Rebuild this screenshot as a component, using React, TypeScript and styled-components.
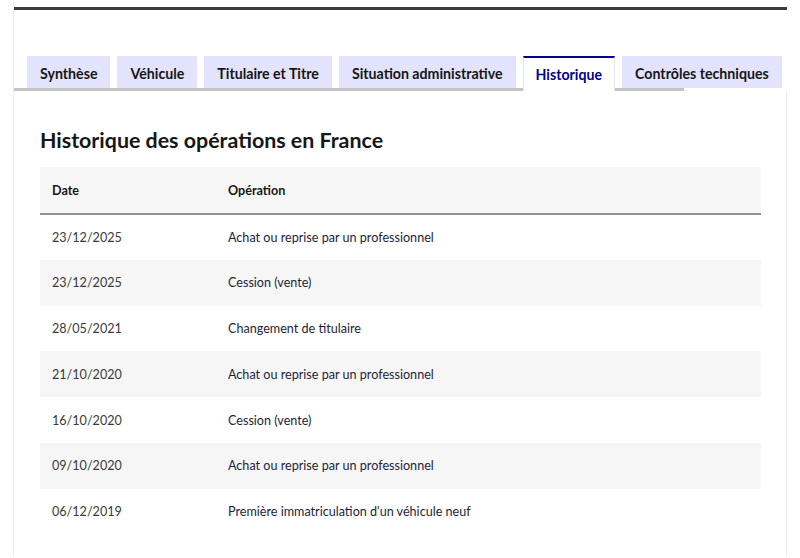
import React from "react";
import styled, { createGlobalStyle } from "styled-components";

const GlobalStyle = createGlobalStyle`
  body {
    margin: 0;
    background: #ffffff;
    font-family: "Lato", "Noto Sans", sans-serif;
    color: #161616;
  }
`;

const tabs = [
  "Synthèse",
  "Véhicule",
  "Titulaire et Titre",
  "Situation administrative",
  "Historique",
  "Contrôles techniques",
];

const operations = [
  { date: "23/12/2025", label: "Achat ou reprise par un professionnel" },
  { date: "23/12/2025", label: "Cession (vente)" },
  { date: "28/05/2021", label: "Changement de titulaire" },
  { date: "21/10/2020", label: "Achat ou reprise par un professionnel" },
  { date: "16/10/2020", label: "Cession (vente)" },
  { date: "09/10/2020", label: "Achat ou reprise par un professionnel" },
  { date: "06/12/2019", label: "Première immatriculation d'un véhicule neuf" },
];

const App = () => {
  return (
    <>
      <GlobalStyle />
      <Page>
        <TopRule />
        <TabList>
          {tabs.map((t) => (
            <Tab key={t} $active={t === "Historique"}>
              {t}
            </Tab>
          ))}
        </TabList>
        <Panel>
          <Heading>Historique des opérations en France</Heading>
          <Table>
            <thead>
              <tr>
                <HeadCell $first>Date</HeadCell>
                <HeadCell>Opération</HeadCell>
              </tr>
            </thead>
            <tbody>
              {operations.map((op, i) => (
                <Row key={i} $odd={i % 2 === 1}>
                  <DateCell>{op.date}</DateCell>
                  <OpCell>{op.label}</OpCell>
                </Row>
              ))}
            </tbody>
          </Table>
        </Panel>
      </Page>
    </>
  );
};

export default App;

const Page = styled.div`
  margin: 0 13px;
  border-left: 1px solid #ececec;
  padding-top: 7px;
`;

const TopRule = styled.div`
  height: 3px;
  background-color: #3a3a3a;
`;

const TabList = styled.div`
  display: flex;
  gap: 7px;
  margin-top: 46px;
  padding-left: 13px;
  position: relative;
  &::after {
    content: "";
    position: absolute;
    left: 0;
    bottom: -3px;
    width: 670px;
    height: 3px;
    background-color: #c4c4c4;
  }
`;

const Tab = styled.div<{ $active?: boolean }>`
  position: relative;
  z-index: 1;
  box-sizing: border-box;
  display: flex;
  align-items: center;
  padding: 0 ${(p) => (p.$active ? "12px" : "12px")};
  font-size: 14.2px;
  font-weight: 700;
  white-space: nowrap;
  color: ${(p) => (p.$active ? "#000091" : "#161616")};
  background-color: ${(p) => (p.$active ? "#ffffff" : "#e3e3fd")};
  border-top: 2px solid ${(p) => (p.$active ? "#000091" : "transparent")};
  border-left: 1px solid ${(p) => (p.$active ? "#e5e5e5" : "transparent")};
  border-right: 1px solid ${(p) => (p.$active ? "#e5e5e5" : "transparent")};
  height: ${(p) => (p.$active ? "35px" : "32px")};
  margin-bottom: ${(p) => (p.$active ? "-3px" : "0")};
`;

const Panel = styled.div`
  border-right: 1px solid #ececec;
  padding: 35px 25px 22px 26px;
  margin-top: 3px;
`;

const Heading = styled.h2`
  margin: 0 0 13px;
  font-size: 21.4px;
  font-weight: 700;
  line-height: 28px;
  color: #161616;
`;

const Table = styled.table`
  width: 100%;
  border-collapse: collapse;
  font-size: 12.6px;
`;

const HeadCell = styled.th<{ $first?: boolean }>`
  text-align: left;
  font-weight: 700;
  height: 46px;
  padding: 0 ${(p) => (p.$first ? "12px" : "10px")};
  width: ${(p) => (p.$first ? "154px" : "auto")};
  background-color: #f6f6f6;
  border-bottom: 2px solid #929292;
  color: #161616;
`;

const Row = styled.tr<{ $odd?: boolean }>`
  background-color: ${(p) => (p.$odd ? "#f6f6f6" : "#ffffff")};
  height: 45.8px;
`;

const DateCell = styled.td`
  padding: 0 12px;
  color: #3a3a3a;
`;

const OpCell = styled.td`
  padding: 0 10px;
  color: #1e1e3c;
`;
